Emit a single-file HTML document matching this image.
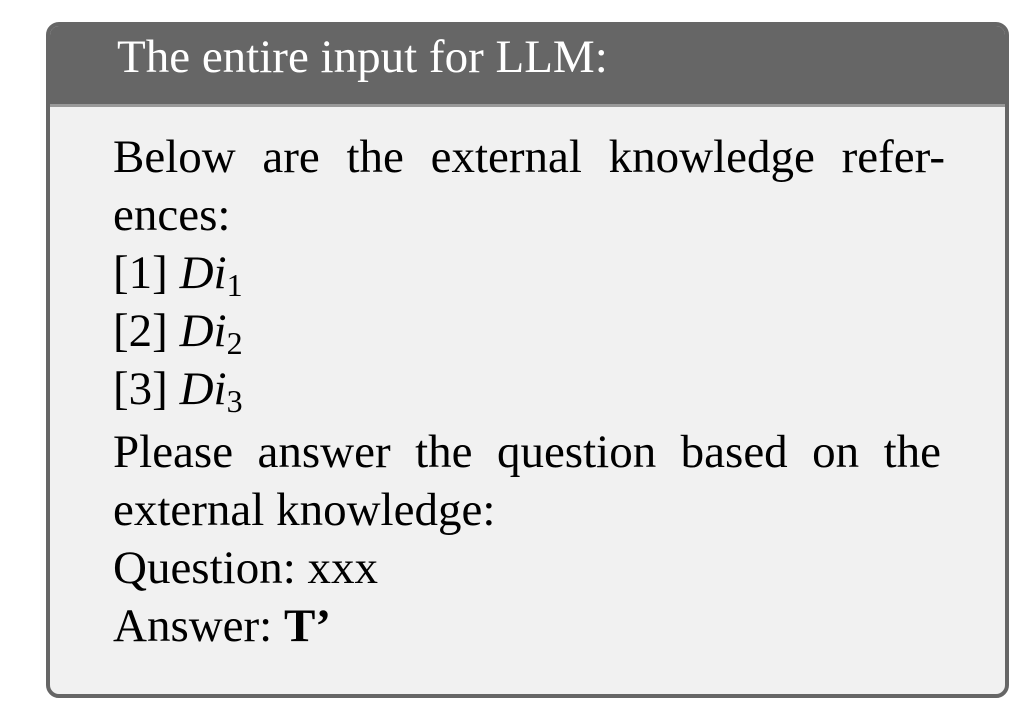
<!DOCTYPE html>
<html><head><meta charset="utf-8"><style>
body{margin:0;width:1030px;height:720px;background:#fff;position:relative;overflow:hidden;font-family:"Liberation Serif",serif;}
.box{position:absolute;left:46px;top:22px;width:955px;height:668px;border:4px solid #666;border-radius:13px;background:#f1f1f1;overflow:hidden;}
.hd{position:absolute;left:0;top:0;right:0;height:78px;background:#666;border-bottom:3px solid #999;}
.t{position:absolute;font-size:47px;line-height:1;white-space:nowrap;color:#000;}
.w{color:#fff;}
.j{width:832px;text-align:justify;text-align-last:justify;}
i{font-style:italic;}
sub{font-size:32px;vertical-align:-8px;line-height:0;font-style:normal;}
</style></head><body>
<div class="box"><div class="hd"></div></div>
<div class="t w" style="left:117px;top:34px">The entire input for LLM:</div>
<div class="t j" style="left:113px;top:134px">Below are the external knowledge refer-</div>
<div class="t" style="left:113px;top:192px">ences:</div>
<div class="t" style="left:113px;top:250px">[1] <i>Di</i><sub>1</sub></div>
<div class="t" style="left:113px;top:308px">[2] <i>Di</i><sub>2</sub></div>
<div class="t" style="left:113px;top:366px">[3] <i>Di</i><sub>3</sub></div>
<div class="t j" style="left:113px;top:429px;width:828px">Please answer the question based on the</div>
<div class="t" style="left:113px;top:487px">external knowledge:</div>
<div class="t" style="left:113px;top:545px">Question: xxx</div>
<div class="t" style="left:113px;top:603px">Answer: <b>T’</b></div>
</body></html>
